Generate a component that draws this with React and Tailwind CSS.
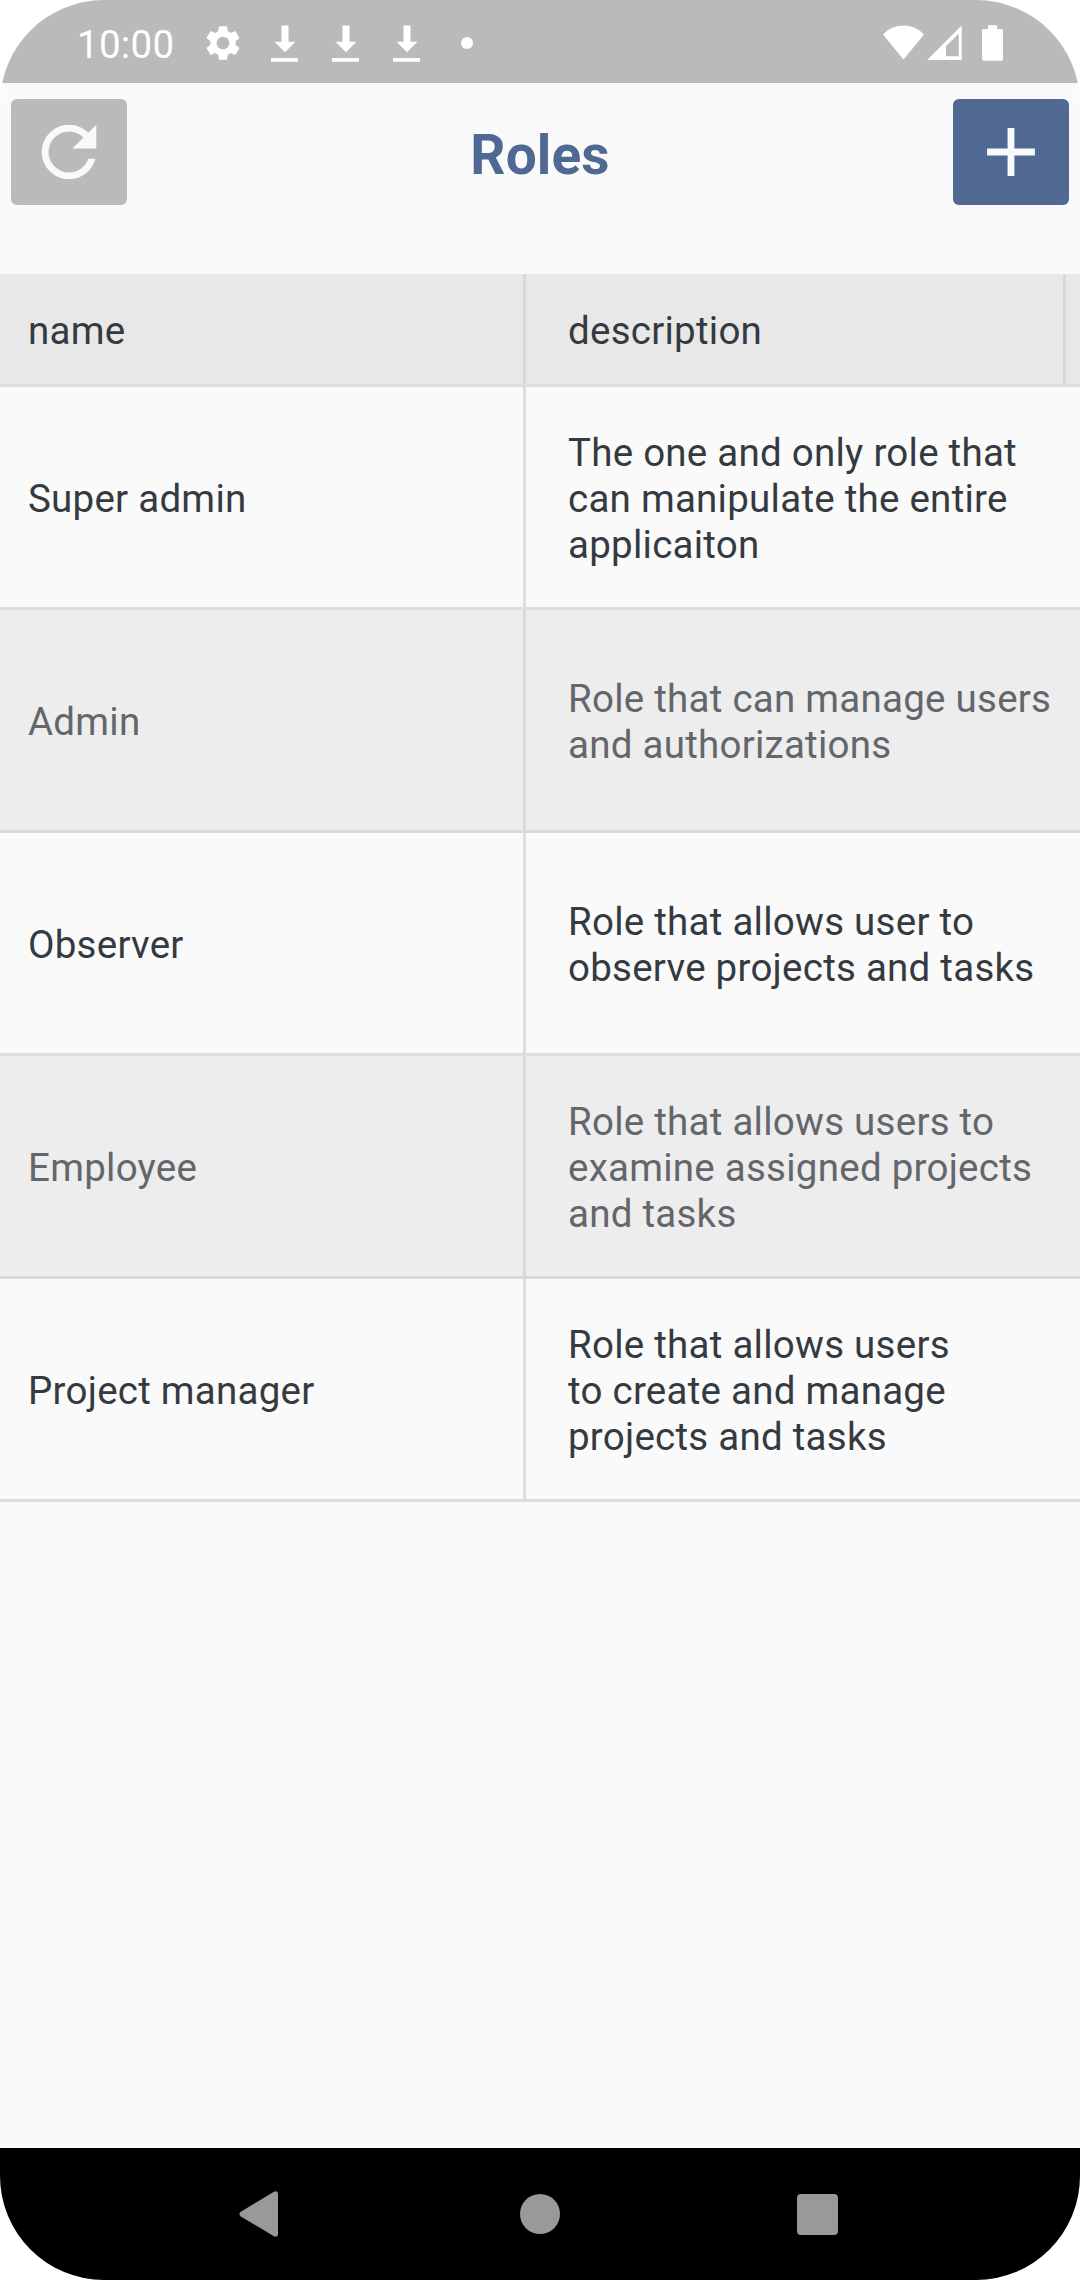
import React from "react";

const roles = [
  { name: "Super admin", lines: ["The one and only role that", "can manipulate the entire", "applicaiton"] },
  { name: "Admin", lines: ["Role that can manage users", "and authorizations"] },
  { name: "Observer", lines: ["Role that allows user to", "observe projects and tasks"] },
  { name: "Employee", lines: ["Role that allows users to", "examine assigned projects", "and tasks"] },
  { name: "Project manager", lines: ["Role that allows users", "to create and manage", "projects and tasks"] },
];

function Gear() {
  return (
    <svg className="ml-[29px] size-[42px] shrink-0" viewBox="0 0 24 24" fill="currentColor">
      <path d="M19.14 12.94c.04-.3.06-.61.06-.94 0-.32-.02-.64-.07-.94l2.03-1.58a.49.49 0 0 0 .12-.61l-1.92-3.32a.488.488 0 0 0-.59-.22l-2.39.96c-.5-.38-1.03-.7-1.62-.94l-.36-2.54a.484.484 0 0 0-.48-.41h-3.84c-.24 0-.43.17-.47.41l-.36 2.54c-.59.24-1.13.57-1.62.94l-2.39-.96c-.22-.08-.47 0-.59.22L2.74 8.87c-.12.21-.08.47.12.61l2.03 1.58c-.05.3-.09.63-.09.94s.02.64.07.94l-2.03 1.58a.49.49 0 0 0-.12.61l1.92 3.32c.12.22.37.29.59.22l2.39-.96c.5.38 1.03.7 1.62.94l.36 2.54c.05.24.24.41.48.41h3.84c.24 0 .44-.17.47-.41l.36-2.54c.59-.24 1.13-.56 1.62-.94l2.39.96c.22.08.47 0 .59-.22l1.92-3.32c.12-.22.07-.47-.12-.61l-2.01-1.58zM12 15.6c-1.98 0-3.6-1.62-3.6-3.6s1.62-3.6 3.6-3.6 3.6 1.62 3.6 3.6-1.62 3.6-3.6 3.6z" />
    </svg>
  );
}

function Download() {
  return (
    <svg className="h-[37px] w-[27px] shrink-0" viewBox="0 0 27 37" fill="currentColor">
      <path d="M10.5.5h7v16.300h7L14 27.200 3.500 16.800h7zM0 33h27v3.700H0z" />
    </svg>
  );
}

function StatusBar() {
  return (
    <div className="flex h-[83px] shrink-0 items-start bg-[#bababa] text-white">
      <div className="mt-[22px] ml-[77px] h-[45px] w-[96px] text-[38.5px] leading-[45px] tracking-[0.3px] whitespace-nowrap">10:00</div>
      <div className="mt-[22px] flex items-center">
        <Gear />
      </div>
      <div className="mt-[25px] ml-[27px] flex gap-[34px]">
        <Download />
        <Download />
        <Download />
      </div>
      <div className="mt-[37px] ml-[41px] size-3 rounded-full bg-white" />
      <svg className="mt-[25px] ml-auto h-[37px] w-[122px]" viewBox="0 0 122 37" fill="currentColor">
        <path d="M1 9.500C6.500 3.300 14 .400 21.500.400S36.500 3.300 42 9.500L21.500 34.500z" />
        <path fillRule="evenodd" d="M79.700.500V35H45.200zM76.700 8.500L64 21.200V31.300H76.700z" />
        <path d="M106 .300h9V4h4.500q1.500 0 1.500 1.500V34q0 1.800-1.800 1.800H101.800q-1.800 0-1.800-1.800V5.500q0-1.500 1.500-1.500h4.500z" />
      </svg>
      <div className="w-[76px] shrink-0" />
    </div>
  );
}

function IconButton({ label, className, d }) {
  return (
    <button aria-label={label} className={"flex h-[106px] w-[116px] items-center justify-center rounded-[6px] text-[#f8f9fa] " + className}>
      <svg className="size-[82px]" viewBox="0 0 24 24" fill="currentColor">
        <path d={d} />
      </svg>
    </button>
  );
}

function TitleBar() {
  return (
    <header className="flex h-[191px] shrink-0 items-start justify-between px-[11px] pt-4">
      <IconButton
        label="Refresh"
        className="bg-[#bababa]"
        d="M17.65,6.35C16.2,4.9 14.21,4 12,4A8,8 0 0,0 4,12A8,8 0 0,0 12,20C15.73,20 18.84,17.45 19.73,14H17.65C16.83,16.33 14.61,18 12,18A6,6 0 0,1 6,12A6,6 0 0,1 12,6C13.66,6 15.14,6.69 16.22,7.78L13,11H20V4L17.65,6.35Z"
      />
      <h1 className="mt-6 text-[55px] leading-[64px] font-bold tracking-[0.1px] text-[#506994]">Roles</h1>
      <IconButton label="Add role" className="bg-[#506994]" d="M19,13H13V19H11V13H5V11H11V5H13V11H19V13Z" />
    </header>
  );
}

function Row({ name, lines, shaded }) {
  return (
    <div className={"flex h-[223px] border-b-[3px] " + (shaded ? "border-[#d9d9d9] bg-[#ededed] text-[#63666a]" : "border-[#dedede] bg-[#fafafa] text-[#343a40]")}>
      <div className={"flex w-[526px] shrink-0 items-center border-r-[3px] pt-1 pl-7 " + (shaded ? "border-[#d9d9d9]" : "border-[#dedede]")}>{name}</div>
      <div className="flex flex-col justify-center pt-1 pl-[42px] whitespace-nowrap">
        {lines.map((line) => (
          <span key={line}>{line}</span>
        ))}
      </div>
    </div>
  );
}

export default function App() {
  return (
    <div className="h-[2280px] w-[1080px] overflow-hidden bg-white font-['Roboto',sans-serif]">
      <div className="flex h-full flex-col overflow-hidden rounded-[104px] bg-[#fafafa]">
        <StatusBar />
        <TitleBar />
        <main className="flex-1 text-[38.5px] leading-[46px] tracking-[0.25px]">
          <div className="flex h-[113px] border-b-[3px] border-[#dedede] bg-[#e8e8e8] text-[#343a40]">
            <div className="flex w-[526px] items-center border-r-[3px] border-[#d8d8d8] pt-1 pl-7">name</div>
            <div className="flex w-[540px] items-center border-r-[3px] border-[#d8d8d8] pt-1 pl-[42px]">description</div>
          </div>
          {roles.map((role, i) => (
            <Row key={role.name} name={role.name} lines={role.lines} shaded={i % 2 === 1} />
          ))}
        </main>
        <nav className="flex h-[132px] shrink-0 items-center bg-black text-[#999999]">
          <svg className="ml-[239px] h-[46px] w-10" viewBox="0 0 40 46" fill="currentColor">
            <path d="M1.800 20.800 34.500.900q4.500-2 4.500 2V43q0 4-4.500 2L1.800 25.400q-2.800-2.300 0-4.600z" />
          </svg>
          <div className="ml-[241px] size-10 rounded-full bg-[#999999]" />
          <div className="ml-[237px] size-[41px] rounded-[4px] bg-[#999999]" />
        </nav>
      </div>
    </div>
  );
}
